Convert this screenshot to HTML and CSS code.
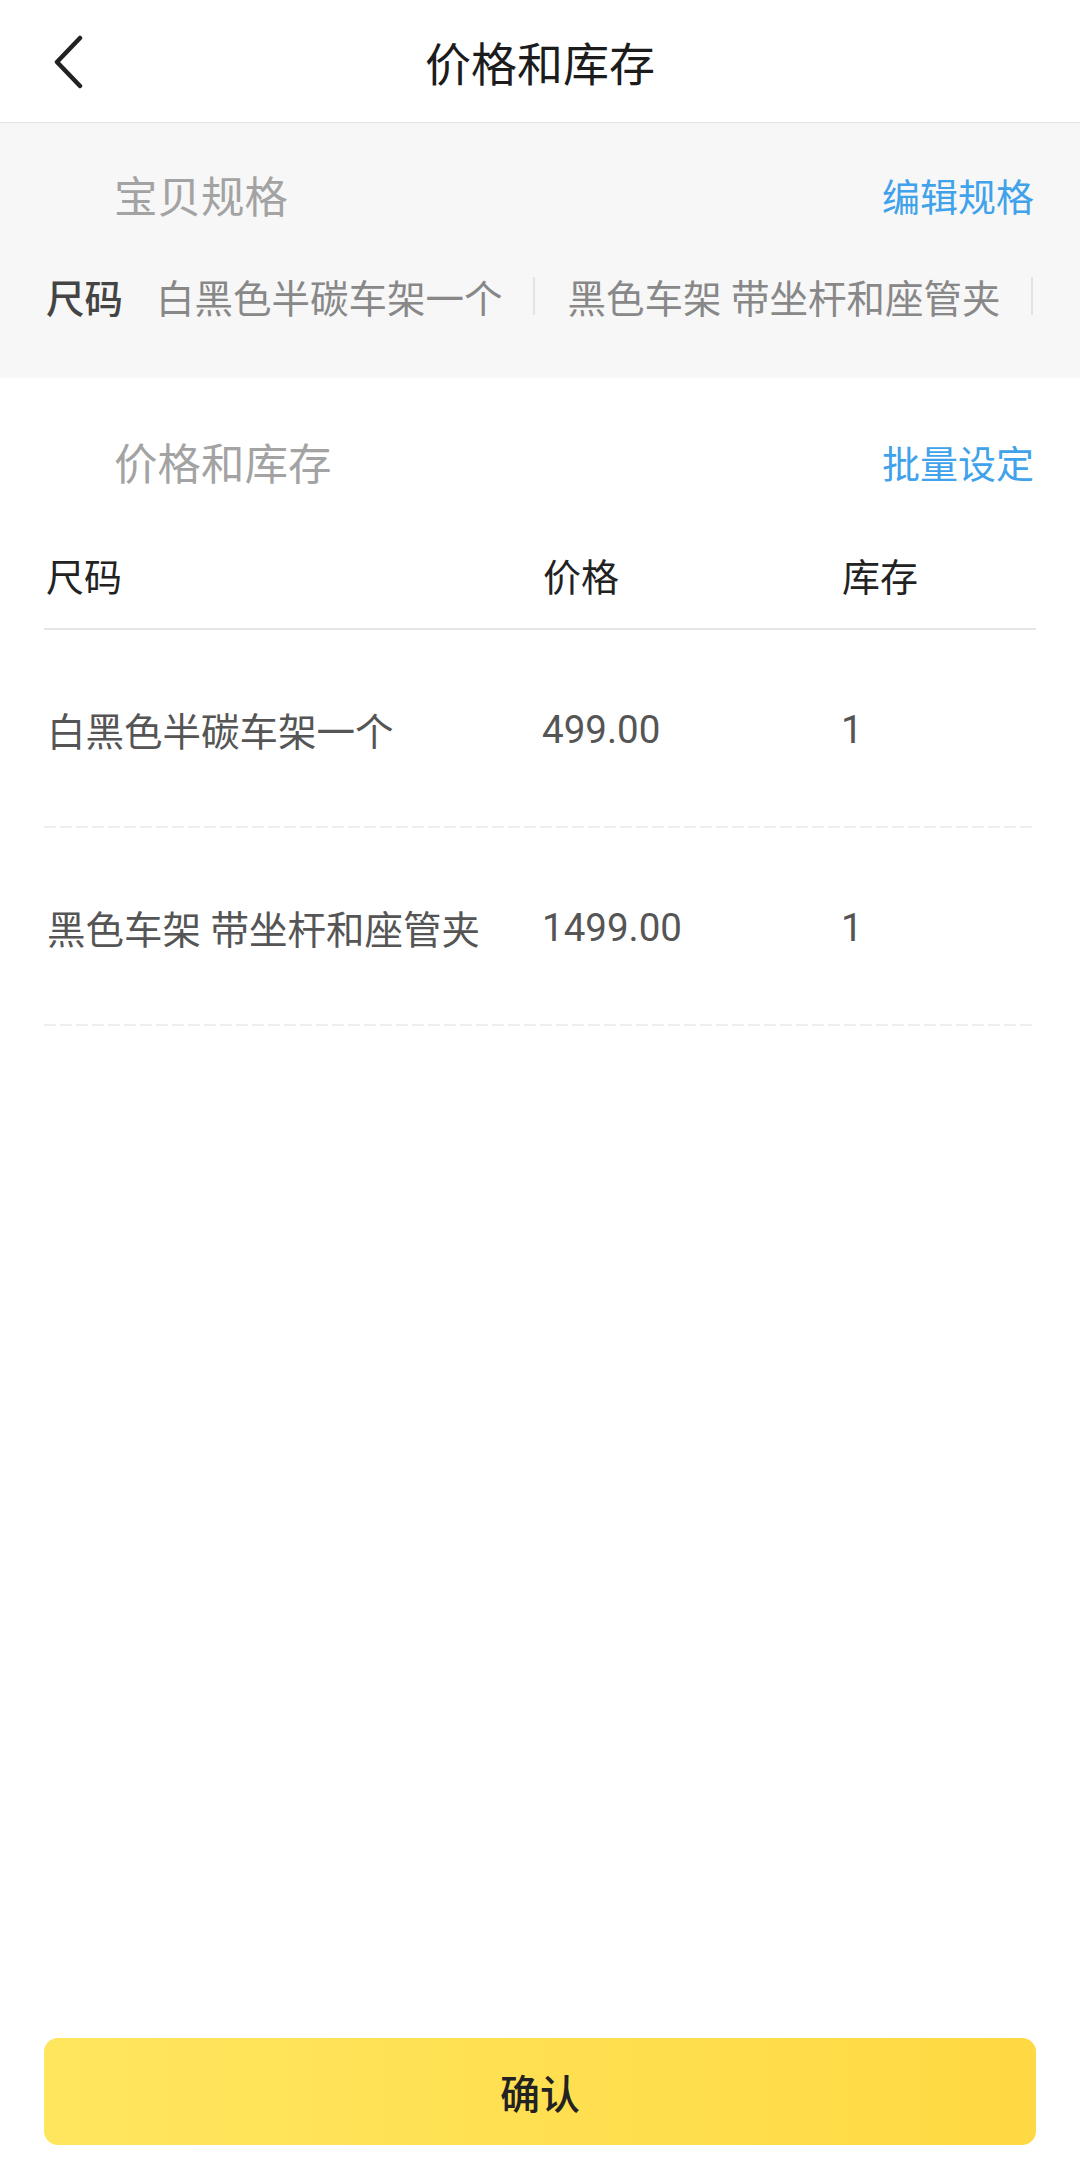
FILE: index.html
```html
<!DOCTYPE html>
<html lang="zh-CN">
<head>
    <meta charset="UTF-8">
    <meta name="viewport" content="width=device-width, initial-scale=1.0">
    <title>价格和库存</title>
    <link rel="stylesheet" href="styles.css">
</head>
<body>
    <header class="top-bar">
        <span class="back">
            <svg width="32" height="54" viewBox="0 0 32 54">
                <path d="M28 3 L5 27 L28 51" fill="none" stroke="#222" stroke-width="4.5" stroke-linecap="round" stroke-linejoin="round"/>
            </svg>
        </span>
        <h1>价格和库存</h1>
    </header>

    <!-- 宝贝规格 -->
    <section class="spec">
        <div class="section-head">
            <span class="section-title">宝贝规格</span>
            <span class="section-link">编辑规格</span>
        </div>
        <div class="spec-row">
            <span class="spec-label">尺码</span>
            <span class="spec-item">白黑色半碳车架一个</span>
            <span class="sep"></span>
            <span class="spec-item">黑色车架 带坐杆和座管夹</span>
            <span class="sep"></span>
        </div>
    </section>

    <!-- 价格和库存 -->
    <section class="stock">
        <div class="section-head">
            <span class="section-title">价格和库存</span>
            <span class="section-link">批量设定</span>
        </div>
        <div class="table-head">
            <span>尺码</span>
            <span>价格</span>
            <span>库存</span>
        </div>
        <div class="table-row">
            <span>白黑色半碳车架一个</span>
            <span>499.00</span>
            <span>1</span>
        </div>
        <div class="table-row">
            <span>黑色车架 带坐杆和座管夹</span>
            <span>1499.00</span>
            <span>1</span>
        </div>
    </section>

    <footer class="bottom">
        <button class="confirm">确认</button>
    </footer>
</body>
</html>
```

FILE: styles.css
```css
body {
    margin: 0;
    width: 1080px;
    height: 2180px;
    display: flex;
    flex-direction: column;
    background-color: #fff;
    font-family: Roboto, "Noto Sans CJK SC", sans-serif;
    overflow: hidden;
}

/* Header */
.top-bar {
    position: relative;
    height: 122px;
    border-bottom: 1px solid #e2e2e2;
    display: flex;
    align-items: center;
    justify-content: center;
}

.back {
    position: absolute;
    left: 52px;
    top: 35px;
    height: 54px;
}

.top-bar h1 {
    margin: 0;
    font-size: 46px;
    font-weight: 400;
    color: #1c1c1c;
}

/* Section headers */
.section-head {
    display: flex;
    justify-content: space-between;
    align-items: center;
    height: 52px;
    padding: 0 2px 0 70px;
}

.section-title {
    font-size: 43.5px;
    color: #a3a3a3;
}

.section-link {
    font-size: 38px;
    color: #3fa2ea;
}

/* 宝贝规格 */
.spec {
    background-color: #f7f7f7;
    height: 255px;
    box-sizing: border-box;
    padding: 45px 44px 0 44px;
}

.spec-row {
    display: flex;
    align-items: center;
    height: 50px;
    margin-top: 51px;
    white-space: nowrap;
    overflow: hidden;
    font-size: 38.5px;
}

.spec-row > span {
    flex-shrink: 0;
}

.spec-label {
    color: #444;
    font-weight: 500;
    margin: 0 33px 0 2px;
}

.spec-item {
    color: #888;
}

.sep {
    width: 2px;
    height: 38px;
    background-color: #e3e3e3;
    margin: 0 33px 0 30px;
}

/* 价格和库存 */
.stock {
    padding: 57px 44px 0 44px;
}

.table-head,
.table-row {
    display: grid;
    grid-template-columns: 497px 299px 1fr;
    align-items: center;
    font-size: 38px;
}

.table-head {
    color: #222;
    padding: 65px 0 24px 2px;
    line-height: 52px;
    border-bottom: 2px solid #e6e6e6;
}

.table-row {
    position: relative;
    height: 198px;
    color: #555;
    padding-left: 3px;
    font-size: 38.5px;
}

.table-row span:nth-child(2),
.table-row span:nth-child(3) {
    margin-left: -2px;
}

.table-row::after {
    content: "";
    position: absolute;
    left: 0;
    right: 0;
    bottom: 0;
    height: 2px;
    background: repeating-linear-gradient(to right, #eeeeee 0 12px, transparent 12px 16px);
}

/* Bottom button */
.bottom {
    margin-top: auto;
    padding: 0 44px 35px 44px;
}

.confirm {
    width: 100%;
    height: 107px;
    border: none;
    border-radius: 14px;
    background: linear-gradient(to right, #ffe65f, #ffd943);
    font-family: Roboto, "Noto Sans CJK SC", sans-serif;
    font-size: 40px;
    font-weight: 500;
    color: #222;
}
```
